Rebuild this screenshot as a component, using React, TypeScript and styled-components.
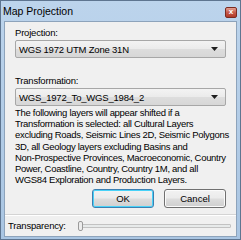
import React from "react";
import styled, { createGlobalStyle } from "styled-components";

const GlobalStyle = createGlobalStyle`
  html, body {
    margin: 0;
    padding: 0;
    background: #ffffff;
  }
  body {
    font-family: "Liberation Sans", Arial, sans-serif;
  }
`;

const noteLines = [
  "The following layers will appear shifted if a",
  "Transformation is selected: all Cultural Layers",
  "excluding Roads, Seismic Lines 2D, Seismic Polygons",
  "3D, all Geology layers excluding Basins and",
  "Non-Prospective Provinces, Macroeconomic, Country",
  "Power, Coastline, Country, Country 1M, and all",
  "WGS84 Exploration and Production Layers.",
];

const Combo = ({ value }: { value: string }) => (
  <ComboBox>
    <ComboText>{value}</ComboText>
    <Arrow width="7" height="4" viewBox="0 0 7 4">
      <path d="M0 0 H7 L3.5 4 Z" fill="#1e1e1e" />
    </Arrow>
  </ComboBox>
);

export default function App() {
  return (
    <>
      <GlobalStyle />
      <Window>
        <TitleBar>
          <Title>Map Projection</Title>
          <CloseButton>x</CloseButton>
        </TitleBar>
        <Client>
          <MainPanel>
            <Label>Projection:</Label>
            <Combo value="WGS 1972 UTM Zone 31N" />
            <Label top={17}>Transformation:</Label>
            <Combo value="WGS_1972_To_WGS_1984_2" />
            <Note>
              {noteLines.map((line) => (
                <NoteLine key={line}>{line}</NoteLine>
              ))}
            </Note>
            <ButtonRow>
              <Button isDefault>OK</Button>
              <Button>Cancel</Button>
            </ButtonRow>
          </MainPanel>
          <TransparencyRow>
            <SmallLabel>Transparency:</SmallLabel>
            <Track>
              <Thumb />
            </Track>
          </TransparencyRow>
        </Client>
      </Window>
    </>
  );
}

const Window = styled.div`
  width: 241px;
  height: 240px;
  box-sizing: border-box;
  display: flex;
  flex-direction: column;
  border: 1px solid #5e7590;
  background: linear-gradient(180deg, #bcd4ec 0%, #a9c5e2 100%);
`;

const TitleBar = styled.div`
  height: 20px;
  display: flex;
  align-items: center;
  justify-content: space-between;
  padding: 0 3px 0 2px;
`;

const Title = styled.span`
  font-family: "Liberation Sans", Arial, sans-serif;
  font-size: 10.5px;
  color: #000000;
`;

const CloseButton = styled.div`
  width: 10px;
  height: 9px;
  margin-top: 2px;
  border: 1px solid #7a2a20;
  border-radius: 2px;
  background: linear-gradient(180deg, #e3a194 0%, #c45443 55%, #b03a28 100%);
  color: #ffffff;
  font-size: 8px;
  font-weight: bold;
  line-height: 8px;
  text-align: center;
`;

const Client = styled.div`
  flex: 1;
  margin: 0 3px 2px 3px;
  display: flex;
  flex-direction: column;
  background: #f0f0f0;
  border: 1px solid #8da3bb;
`;

const MainPanel = styled.div`
  display: flex;
  flex-direction: column;
  padding: 5px 10px 6px 10px;
  border-bottom: 1px solid #d4d4d4;
  box-shadow: 0 1px 0 #ffffff;
`;

const Label = styled.div<{ top?: number }>`
  margin-top: ${(p) => p.top ?? 0}px;
  margin-bottom: 2px;
  font-size: 9.5px;
  line-height: 11px;
  letter-spacing: -0.2px;
  color: #000000;
`;

const ComboBox = styled.div`
  height: 16px;
  display: flex;
  align-items: center;
  justify-content: space-between;
  padding: 0 7px 0 3px;
  border: 1px solid #a7a7a7;
  border-radius: 2px;
  background: linear-gradient(180deg, #f3f3f3 0%, #ebebeb 48%, #dddddd 52%, #d7d7d7 100%);
`;

const ComboText = styled.span`
  font-size: 9.5px;
  letter-spacing: -0.2px;
  color: #000000;
`;

const Arrow = styled.svg`
  display: block;
`;

const Note = styled.div`
  margin-top: 1px;
  display: flex;
  flex-direction: column;
`;

const NoteLine = styled.span`
  font-size: 9.5px;
  line-height: 11.2px;
  letter-spacing: -0.3px;
  white-space: nowrap;
  color: #000000;
`;

const ButtonRow = styled.div`
  margin-top: 4px;
  display: flex;
  justify-content: flex-end;
  gap: 10px;
`;

const Button = styled.div<{ isDefault?: boolean }>`
  width: 60px;
  height: 17px;
  display: flex;
  align-items: center;
  justify-content: center;
  font-size: 9.5px;
  color: #000000;
  border: 1px solid ${(p) => (p.isDefault ? "#3c7fb1" : "#707070")};
  border-radius: 3px;
  box-shadow: inset 0 0 0 1px ${(p) => (p.isDefault ? "#48d2f8" : "#fbfbfb")};
  background: linear-gradient(180deg, #f2f2f2 0%, #ebebeb 48%, #dddddd 52%, #cfcfcf 100%);
`;

const TransparencyRow = styled.div`
  flex: 1;
  display: flex;
  align-items: center;
  padding: 0 5px 0 3px;
  gap: 12px;
`;

const SmallLabel = styled.span`
  font-size: 9.5px;
  letter-spacing: -0.2px;
  color: #000000;
`;

const Track = styled.div`
  flex: 1;
  height: 2px;
  position: relative;
  border: 1px solid #c2c2c2;
  border-radius: 1px;
  background: #e7eaea;
`;

const Thumb = styled.div`
  position: absolute;
  left: -1px;
  top: -4px;
  width: 3px;
  height: 8px;
  border: 1px solid #9a9a9a;
  border-radius: 2px;
  background: #ececec;
`;
